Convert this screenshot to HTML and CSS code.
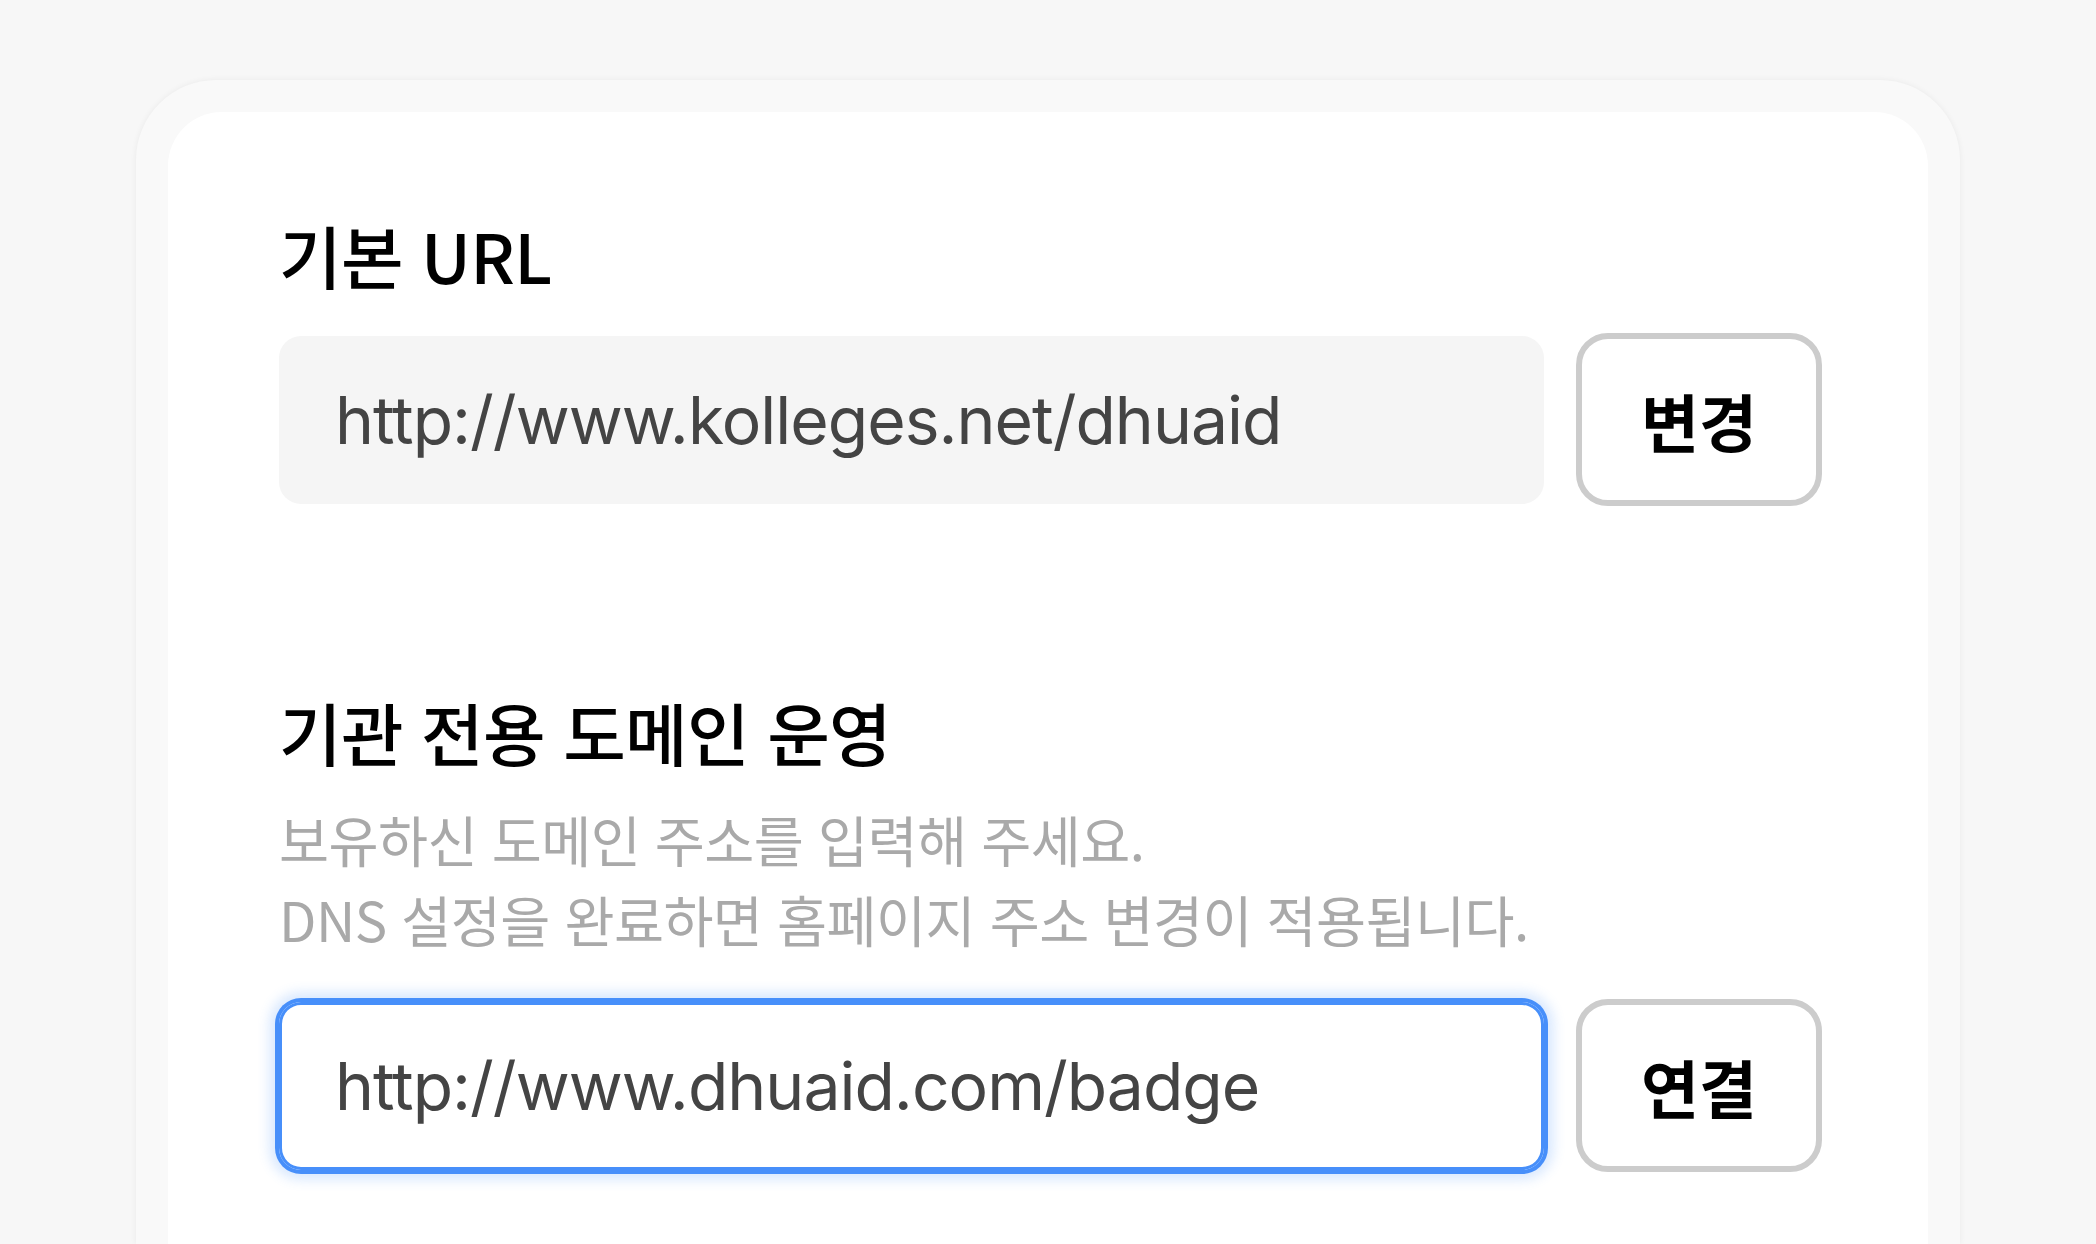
FILE: index.html
```html
<!DOCTYPE html>
<html lang="ko">
<head>
<meta charset="utf-8">
<title>도메인 설정</title>
<link rel="stylesheet" href="styles.css">
</head>
<body>
<div class="page">
  <div class="frame">
    <div class="card">
      <section class="section">
        <h2 class="title">기본 URL</h2>
        <div class="row">
          <div class="field field-readonly">http://www.kolleges.net/dhuaid</div>
          <button class="btn" type="button">변경</button>
        </div>
      </section>
      <section class="section section-domain">
        <h2 class="title">기관 전용 도메인 운영</h2>
        <p class="desc">보유하신 도메인 주소를 입력해 주세요.<br>DNS 설정을 완료하면 홈페이지 주소 변경이 적용됩니다.</p>
        <div class="row">
          <div class="field field-focus">http://www.dhuaid.com/badge</div>
          <button class="btn" type="button">연결</button>
        </div>
      </section>
    </div>
  </div>
</div>
</body>
</html>
```

FILE: styles.css
```css
* { box-sizing: border-box; }
html, body { margin: 0; padding: 0; }
body {
  background: #f7f7f7;
  font-family: "Noto Sans CJK KR", "Inter", sans-serif;
  height: 1244px;
  overflow: hidden;
}
.page {
  padding: 80px 136px 0;
}
.frame {
  background: #f9f9f9;
  border-radius: 80px 80px 0 0;
  padding: 32px 32px 0;
  box-shadow: 0 0 6px rgba(0, 0, 0, 0.06);
  height: 1164px;
  overflow: hidden;
}
.card {
  background: #ffffff;
  border-radius: 54px 54px 0 0;
  padding: 97px 106px 0 111px;
  height: 1132px;
}
.title {
  margin: 0;
  font-size: 68px;
  line-height: 92px;
  font-weight: 500;
  color: #000;
  letter-spacing: -0.01em;
}
.row {
  display: flex;
  align-items: center;
  gap: 32px;
  height: 173px;
  margin-top: 32px;
}
.field {
  flex: 1;
  height: 168px;
  border-radius: 22px;
  display: flex;
  align-items: center;
  padding: 0 56px;
  font-family: "Inter", "Noto Sans CJK KR", sans-serif;
  font-size: 66px;
  color: #444444;
  letter-spacing: -0.015em;
  white-space: nowrap;
}
.field-readonly {
  background: #f5f5f5;
}
.field-focus {
  background: #ffffff;
  box-shadow: 0 0 0 4px #478ffa, inset 0 0 0 3px #478ffa, 0 0 12px 10px rgba(71, 143, 250, 0.2);
}
.btn {
  width: 246px;
  height: 173px;
  flex: none;
  background: #ffffff;
  border: 6px solid #cccccc;
  border-radius: 32px;
  font-family: "Noto Sans CJK KR", sans-serif;
  font-size: 63px;
  font-weight: 700;
  color: #000;
  padding: 0;
}
.section-domain {
  margin-top: 180px;
}
.desc {
  margin: 21px 0 0;
  font-size: 54.4px;
  line-height: 80px;
  color: #a9a9a9;
  font-weight: 400;
  letter-spacing: -0.01em;
}
.section-domain .row {
  margin-top: 40px;
}
```
